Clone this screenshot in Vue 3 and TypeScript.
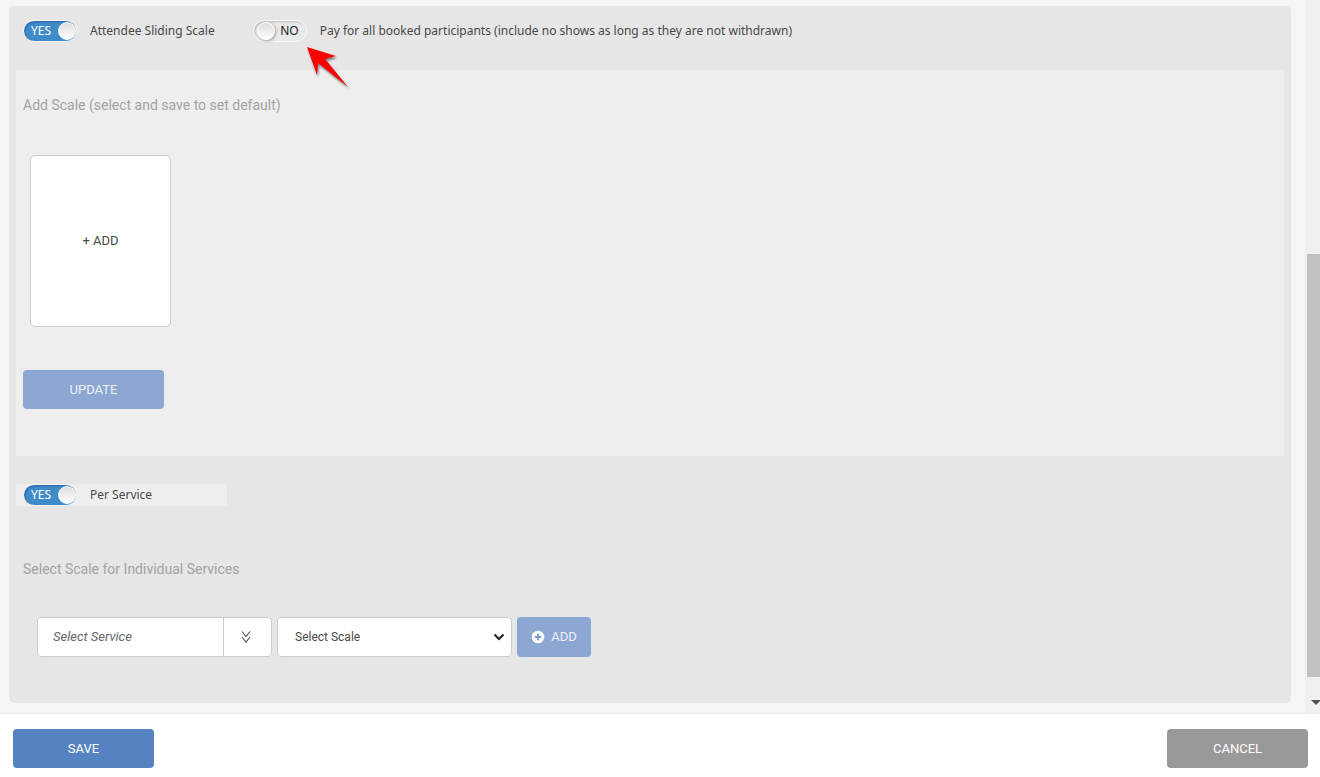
<script setup lang="ts">
import { ref } from 'vue'

const slidingScale = ref(true)
const payForBooked = ref(false)
const perService = ref(true)
const service = ref('')
const scale = ref('')
</script>

<template>
  <div class="page">
    <div class="body">
      <main class="content">
        <section class="panel">
          <div class="switches">
            <label class="option">
              <span class="toggle" :class="{ on: slidingScale }">
                <input v-model="slidingScale" type="checkbox" role="switch" />
                <span>{{ slidingScale ? 'YES' : 'NO' }}</span>
                <span class="knob"></span>
              </span>
              <span>Attendee Sliding Scale</span>
            </label>
            <label class="option">
              <span class="toggle" :class="{ on: payForBooked }">
                <input v-model="payForBooked" type="checkbox" role="switch" />
                <span>{{ payForBooked ? 'YES' : 'NO' }}</span>
                <span class="knob"></span>
                <svg class="pointer" width="48" height="46" viewBox="0 0 48 46" aria-hidden="true">
                  <path d="M2 2L31 11L20 14L43 42L13 18L12 30Z" />
                </svg>
              </span>
              <span>Pay for all booked participants (include no shows as long as they are not withdrawn)</span>
            </label>
          </div>

          <div class="scales">
            <h2>Add Scale (select and save to set default)</h2>
            <button type="button" class="card">+ ADD</button>
            <div class="update-row">
              <button type="button" class="btn soft wide">UPDATE</button>
            </div>
          </div>

          <div class="per-service">
            <label class="option">
              <span class="toggle" :class="{ on: perService }">
                <input v-model="perService" type="checkbox" role="switch" />
                <span>{{ perService ? 'YES' : 'NO' }}</span>
                <span class="knob"></span>
              </span>
              <span>Per Service</span>
            </label>
          </div>

          <h2 class="services-title">Select Scale for Individual Services</h2>
          <div class="service-row">
            <div class="combo">
              <input v-model="service" type="text" placeholder="Select Service" aria-label="Select Service" />
              <button type="button" aria-label="Show services">
                <svg width="10" height="14" viewBox="0 0 10 14" aria-hidden="true">
                  <path d="M1 1.5L5 6.5L9 1.5M1 7L5 12L9 7" />
                </svg>
              </button>
            </div>
            <div class="select">
              <select v-model="scale" aria-label="Select Scale">
                <option value="">Select Scale</option>
              </select>
              <svg width="12" height="8" viewBox="0 0 12 8" aria-hidden="true"><path d="M1.5 1.5L6 6L10.5 1.5" /></svg>
            </div>
            <button type="button" class="btn soft add">
              <svg width="14" height="14" viewBox="0 0 14 14" aria-hidden="true">
                <circle cx="7" cy="7" r="6.3" />
                <path d="M7 3.8V10.2M3.8 7H10.2" />
              </svg>
              <span>ADD</span>
            </button>
          </div>
        </section>
      </main>
      <div class="scrollbar" aria-hidden="true">
        <div class="thumb"></div>
        <svg width="10" height="5" viewBox="0 0 10 5"><path d="M0 0H10L5 5Z" /></svg>
      </div>
    </div>
    <footer class="footer">
      <button type="button" class="btn save wide">SAVE</button>
      <button type="button" class="btn cancel wide">CANCEL</button>
    </footer>
  </div>
</template>

<style>
body {
  margin: 0;
}
</style>

<style scoped>
* {
  box-sizing: border-box;
}
.page {
  display: flex;
  flex-direction: column;
  min-height: 100vh;
  background: #fff;
  color: #484848;
  font: 12px/20px Roboto, "Noto Sans", sans-serif;
}
button,
input,
select {
  font: inherit;
  color: inherit;
}
button {
  cursor: pointer;
}
.body {
  display: flex;
  flex: 1;
  background: #f5f5f5;
  border-bottom: 1px solid #ebebeb;
}
.content {
  display: flex;
  flex: 1;
  min-width: 0;
  padding: 6px 14px 10px 9px;
}
.panel {
  flex: 1;
  padding: 14px 7px 46px;
  background: #e6e6e6;
  border-radius: 5px;
}
.switches {
  display: flex;
  gap: 38px;
  padding-left: 7px;
  height: 50px;
}
.option {
  display: flex;
  align-items: center;
  align-self: flex-start;
  gap: 13px;
  height: 22px;
  font-family: "Noto Sans", "Open Sans", sans-serif;
}
.toggle {
  position: relative;
  display: flex;
  align-items: center;
  flex-direction: row-reverse;
  justify-content: space-between;
  width: 54px;
  height: 22px;
  padding: 0 7px 0 3px;
  border: 1px solid #f8f8f8;
  border-radius: 11px;
  background: #e9e9e9;
  box-shadow: inset 1px 1px 2px #bbb;
  color: #222;
}
.toggle.on {
  flex-direction: row;
  padding: 0 0 0 7px;
  background: #428bca;
  box-shadow: inset 1px 1px 2px #2b649c;
  color: #fff;
}
.toggle input {
  position: absolute;
  inset: 0;
  width: 100%;
  height: 100%;
  margin: 0;
  opacity: 0;
  cursor: pointer;
}
.knob {
  width: 18px;
  height: 18px;
  border: 1px solid #fff;
  border-radius: 50%;
  background: linear-gradient(#dcdcdc, #fff);
  box-shadow: 1px 1px 3px #999;
}
.on .knob {
  box-shadow: none;
}
.pointer {
  position: absolute;
  left: 51px;
  top: 24px;
  z-index: 1;
  fill: #f00;
  filter: drop-shadow(1px 2px 1px #777);
  pointer-events: none;
}
h2 {
  margin: 0;
  color: #a3a3a3;
  font-size: 14px;
  font-weight: 400;
  line-height: 20px;
}
.scales {
  height: 386px;
  padding: 25px 7px 0;
  background: #eee;
}
.card {
  display: block;
  width: 141px;
  height: 172px;
  margin: 40px 7px 42px;
  border: 1px solid #ccc;
  border-radius: 5px;
  background: #fff;
  font-size: 13px;
}
.update-row {
  border-top: 1px solid #ebebeb;
}
.btn {
  height: 39px;
  padding: 0;
  border: 0;
  border-radius: 4px;
  color: #fff;
  font-size: 13px;
}
.wide {
  width: 141px;
}
.soft {
  background: #8ba7d2;
  color: #eef2f8;
}
.save {
  background: #5583c2;
}
.cancel {
  background: #999;
}
.per-service {
  width: 211px;
  margin-top: 28px;
  padding-left: 7px;
  background: #eee;
}
.services-title {
  margin: 53px 7px 38px;
}
.service-row {
  display: flex;
  gap: 5px;
  height: 40px;
  padding-left: 21px;
}
.combo {
  display: flex;
  width: 235px;
  border: 1px solid #ccc;
  border-radius: 4px;
  background: #fff;
}
.combo input {
  flex: 1;
  min-width: 0;
  padding: 0 15px;
  border: 0;
  background: none;
  font-size: 13px;
  font-style: italic;
}
.combo input::placeholder {
  color: #666;
  opacity: 1;
}
.combo button {
  display: grid;
  place-items: center;
  width: 48px;
  padding: 0 4px 0 0;
  border: 0;
  border-left: 1px solid #ccc;
  background: none;
}
.combo svg {
  fill: none;
  stroke: #555;
  stroke-width: 1.2;
}
.select {
  position: relative;
  width: 235px;
}
.select select {
  width: 100%;
  height: 100%;
  padding: 0 17px;
  border: 1px solid #ccc;
  border-radius: 4px;
  background: #fff;
  appearance: none;
}
.select svg {
  position: absolute;
  right: 7px;
  top: 16px;
  fill: none;
  stroke: #222;
  stroke-width: 2;
  pointer-events: none;
}
.add {
  display: flex;
  align-items: center;
  justify-content: center;
  gap: 6px;
  width: 74px;
  height: 40px;
}
.add circle {
  fill: #fff;
}
.add path {
  fill: none;
  stroke: #7f9dcb;
  stroke-width: 2;
}
.scrollbar {
  display: flex;
  flex-direction: column;
  width: 15px;
  padding: 254px 0 8px 2px;
  overflow: hidden;
  background: #f0f0f0;
}
.thumb {
  flex: 1;
  margin-bottom: 23px;
  background: #c1c1c1;
}
.scrollbar svg {
  flex: none;
  margin-left: 4px;
  fill: #505050;
}
.footer {
  display: flex;
  justify-content: space-between;
  padding: 15px 12px 9px 13px;
}
</style>
